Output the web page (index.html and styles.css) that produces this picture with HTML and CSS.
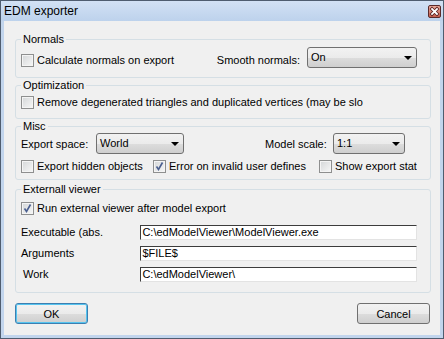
FILE: index.html
```html
<!DOCTYPE html>
<html lang="en">
<head>
    <meta charset="UTF-8">
    <title>EDM exporter</title>
    <link rel="stylesheet" href="styles.css">
</head>
<body>
    <div class="window">
        <div class="titlebar">
            <span class="title">EDM exporter</span>
            <span class="close">
                <svg width="11" height="11" viewBox="0 0 11 11">
                    <path d="M3 3 L8 8 M8 3 L3 8" stroke="#5a2020" stroke-width="3.4" stroke-linecap="square"/>
                    <path d="M3 3 L8 8 M8 3 L3 8" stroke="#fff" stroke-width="1.8" stroke-linecap="square"/>
                </svg>
            </span>
        </div>

        <div class="client">
            <fieldset class="group group-normals">
                <legend>Normals</legend>
                <div class="row row-normals">
                    <label class="check check-top"><span class="box"></span>Calculate normals on export</label>
                    <div class="pair">
                        <span class="field-label label-top">Smooth normals:</span>
                        <div class="combo combo-smooth"><span>On</span><i class="arrow"></i></div>
                    </div>
                </div>
            </fieldset>

            <fieldset class="group group-optim">
                <legend>Optimization</legend>
                <div class="row row-single">
                    <label class="check"><span class="box"></span>Remove degenerated triangles and duplicated vertices (may be slo</label>
                </div>
            </fieldset>

            <fieldset class="group group-misc">
                <legend>Misc</legend>
                <div class="row row-combos">
                    <span class="field-label label-space">Export space:</span>
                    <div class="combo combo-space"><span>World</span><i class="arrow"></i></div>
                    <span class="field-label label-scale">Model scale:</span>
                    <div class="combo combo-scale"><span>1:1</span><i class="arrow"></i></div>
                </div>
                <div class="row row-checks">
                    <label class="check check-hidden"><span class="box"></span>Export hidden objects</label>
                    <label class="check check-error"><span class="box checked"><svg width="11" height="11" viewBox="0 0 11 11"><path d="M2.5 5.5 L4.5 8.5 L8.5 1.5" fill="none" stroke="#4a5f8f" stroke-width="1.6"/></svg></span>Error on invalid user defines</label>
                    <label class="check check-stat"><span class="box"></span>Show export stat</label>
                </div>
            </fieldset>

            <fieldset class="group group-viewer">
                <legend>Externall viewer</legend>
                <div class="row row-run">
                    <label class="check"><span class="box checked"><svg width="11" height="11" viewBox="0 0 11 11"><path d="M2.5 5.5 L4.5 8.5 L8.5 1.5" fill="none" stroke="#4a5f8f" stroke-width="1.6"/></svg></span>Run external viewer after model export</label>
                </div>
                <div class="row row-field first-field">
                    <span class="field-label edit-label">Executable (abs.</span>
                    <div class="edit">C:\edModelViewer\ModelViewer.exe</div>
                </div>
                <div class="row row-field">
                    <span class="field-label edit-label">Arguments</span>
                    <div class="edit">$FILE$</div>
                </div>
                <div class="row row-field">
                    <span class="field-label edit-label label-work">Work</span>
                    <div class="edit">C:\edModelViewer\</div>
                </div>
            </fieldset>

            <div class="buttons">
                <button class="btn btn-default">OK</button>
                <button class="btn">Cancel</button>
            </div>
        </div>
    </div>
</body>
</html>
```

FILE: styles.css
```css
* {
    box-sizing: border-box;
}
body {
    margin: 0;
    font-family: "Liberation Sans", Arial, sans-serif;
    font-size: 11px;
    color: #000;
    background: #fff;
}
.window {
    width: 444px;
    height: 339px;
    border: 1px solid #4f5d6f;
    background: #c2d5ed;
    padding: 0 3px 3px 3px;
    display: flex;
    flex-direction: column;
}
.titlebar {
    height: 20px;
    display: flex;
    align-items: center;
    justify-content: space-between;
    background: linear-gradient(#d2e1f4, #bdd2ec);
    margin: 0 -3px;
    padding: 0 3px;
}
.title {
    font-size: 12px;
    line-height: 14px;
}
.close {
    width: 13px;
    height: 13px;
    border: 1px solid #5b2a2a;
    border-radius: 2px;
    background: linear-gradient(#e8aa9c, #c7604f);
    display: flex;
    align-items: center;
    justify-content: center;
    margin-right: -1px;
}
.client {
    flex: 1;
    background: #f0f0f0;
    padding: 0 9px 0 11px;
}
.group {
    margin: 0;
    padding: 0 13px 0 5px;
    border: 1px solid #d5dfe5;
    border-radius: 3px;
    min-width: 0;
}
.group legend {
    padding: 0 2px;
    line-height: 13px;
}
.group-normals {
    margin-top: 12px;
    padding-top: 1px;
    padding-bottom: 8px;
}
.group-optim {
    margin-top: 1px;
    padding-bottom: 5px;
}
.group-misc {
    margin-top: 1px;
    padding-bottom: 4px;
}
.group-viewer {
    margin-top: 3px;
    padding-bottom: 7px;
}
.row {
    display: flex;
    align-items: center;
    white-space: nowrap;
}
.row-normals {
    height: 22px;
    align-items: flex-start;
    justify-content: space-between;
}
.row-single {
    height: 21px;
}
.row-combos {
    height: 22px;
    align-items: flex-start;
}
.row-checks {
    height: 18px;
    margin-top: 2px;
}
.row-run {
    height: 20px;
    margin-top: 2px;
}
.row-field {
    height: 21px;
}
.first-field {
    margin-top: 4px;
}
.check {
    display: flex;
    align-items: center;
    gap: 3px;
    line-height: 13px;
}
.check-top {
    margin-top: 7px;
}
.box {
    width: 13px;
    height: 13px;
    border: 1px solid #8e8f8f;
    background: linear-gradient(135deg, #d4d6d8, #f7f7f7);
    box-shadow: inset 0 0 0 1px #f4f4f4;
    display: flex;
    align-items: center;
    justify-content: center;
    flex: none;
}
.pair {
    display: flex;
    align-items: flex-start;
    gap: 7px;
}
.field-label {
    line-height: 13px;
}
.label-top {
    margin-top: 7px;
}
.combo {
    height: 21px;
    border: 1px solid #707070;
    border-radius: 3px;
    background: linear-gradient(#f2f2f2 0%, #ebebeb 50%, #dddddd 51%, #cfcfcf 100%);
    display: flex;
    align-items: center;
    justify-content: space-between;
    padding: 0 4px 0 3px;
    line-height: 13px;
}
.arrow {
    width: 0;
    height: 0;
    border-left: 4px solid transparent;
    border-right: 4px solid transparent;
    border-top: 4px solid #000;
}
.combo-smooth {
    width: 110px;
}
.label-space {
    width: 75px;
    margin-top: 5px;
}
.combo-space {
    width: 88px;
}
.label-scale {
    width: 68px;
    margin-left: 81px;
    margin-top: 5px;
}
.combo-scale {
    width: 72px;
}
.check-hidden {
    width: 132px;
}
.check-error {
    width: 166px;
}
.check-stat {
    width: 98px;
    overflow: hidden;
}
.edit-label {
    width: 120px;
}
.label-work {
    padding-left: 2px;
}
.edit {
    width: 278px;
    height: 15px;
    background: #fff;
    border: 1px solid;
    border-color: #3c3c3c #e3e3e3 #e3e3e3 #3c3c3c;
    padding-left: 1px;
    line-height: 13px;
}
.buttons {
    display: flex;
    justify-content: space-between;
    margin-top: 10px;
    margin-right: 1px;
}
.btn {
    width: 73px;
    height: 21px;
    font-family: inherit;
    font-size: 11px;
    color: #000;
    border: 1px solid #707070;
    border-radius: 3px;
    background: linear-gradient(#f2f2f2 0%, #ebebeb 50%, #dddddd 51%, #cfcfcf 100%);
    padding: 0;
}
.btn-default {
    border-color: #3c7fb1;
    box-shadow: inset 0 0 0 1px #56c4ef;
}
```
